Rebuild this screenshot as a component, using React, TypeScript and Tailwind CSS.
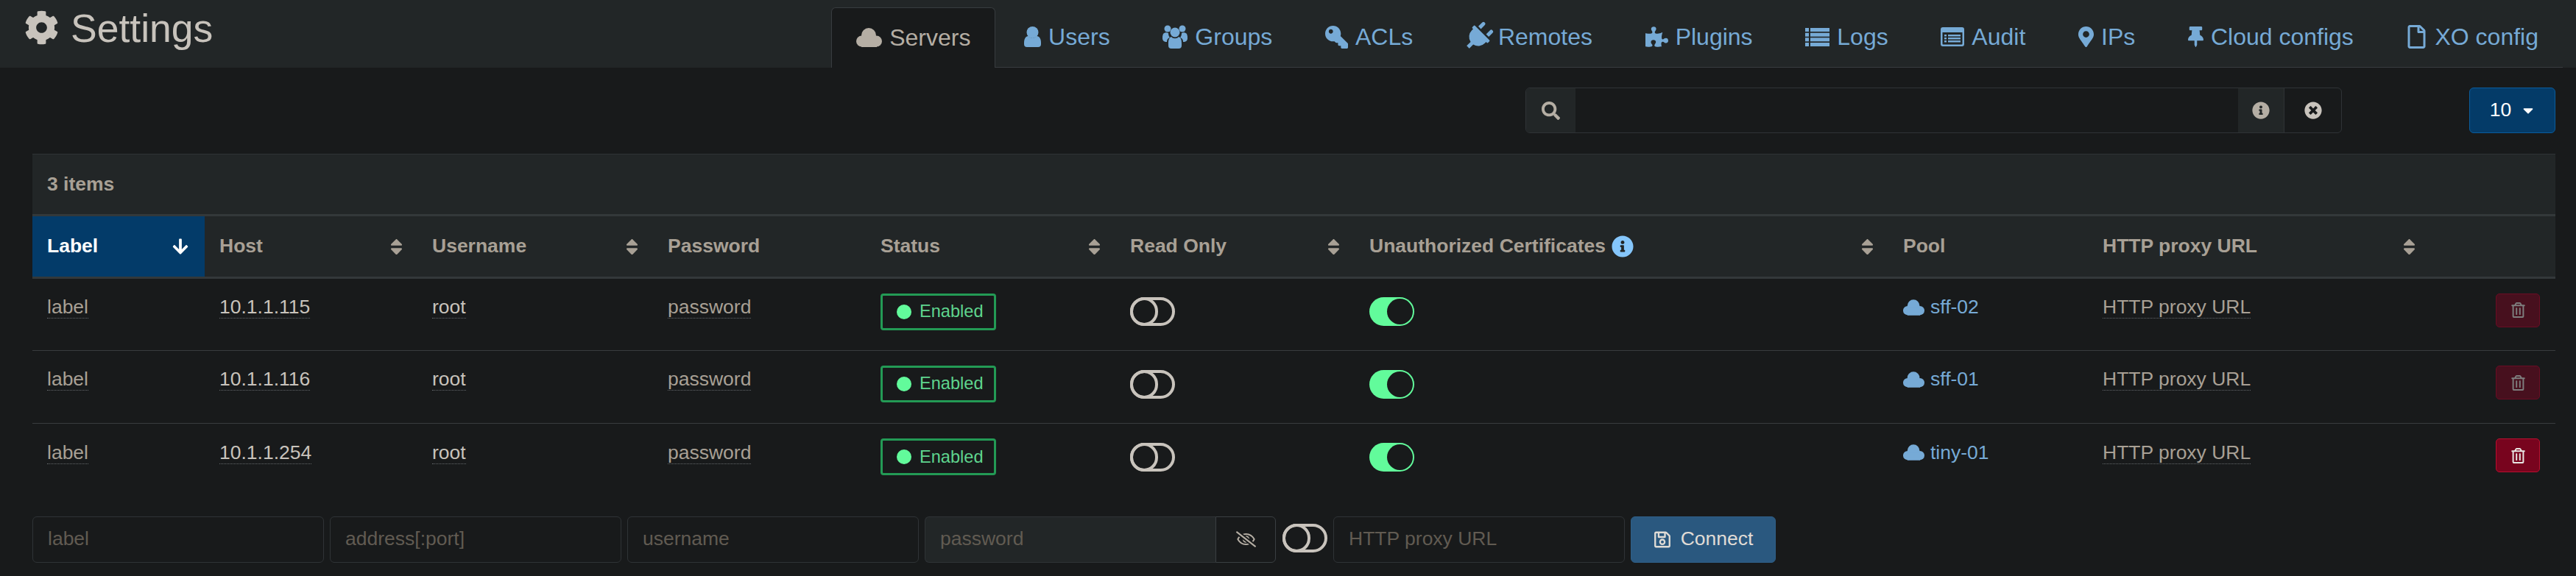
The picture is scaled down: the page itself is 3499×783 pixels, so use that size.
import React from "react";
import {
  FaArrowDown,
  FaCaretDown,
  FaCog,
  FaInfoCircle,
  FaKey,
  FaMapMarkerAlt,
  FaPlug,
  FaPuzzlePiece,
  FaRegEyeSlash,
  FaRegFile,
  FaRegSave,
  FaRegTrashAlt,
  FaSearch,
  FaSort,
  FaThumbtack,
  FaTimesCircle,
} from "react-icons/fa";

// older font-awesome shapes, react-icons only has the newer ones
function CloudIcon({ className }: { className: string }) {
  return (
    <svg viewBox="0 0 35 26" fill="currentColor" className={className}>
      <circle cx="7.5" cy="18" r="7.5" />
      <circle cx="17" cy="10" r="10" />
      <circle cx="27.5" cy="18" r="7.5" />
      <rect x="7" y="14" width="21" height="12" />
    </svg>
  );
}

function UserIcon({ className }: { className: string }) {
  return (
    <svg viewBox="0 0 23 28" fill="currentColor" className={className}>
      <circle cx="11.5" cy="8" r="8" />
      <path d="M0 22C0 17 2 13 6 13C8 16.500 15 16.500 17 13C21 13 23 17 23 22V24Q23 28 19 28H4Q0 28 0 24Z" />
    </svg>
  );
}

function GroupIcon({ className }: { className: string }) {
  return (
    <svg viewBox="0 0 34 32" fill="currentColor" className={className}>
      <circle cx="7" cy="5" r="4.500" />
      <circle cx="27" cy="5" r="4.500" />
      <circle cx="17" cy="10" r="6.500" />
      <path d="M1 12C3 10 6 10 8 11C8 14 9 16 10 17C7 18 6 20 6 23C2 23 0 21 0 18Q0 14 1 12Z" />
      <path d="M33 12C31 10 28 10 26 11C26 14 25 16 24 17C27 18 28 20 28 23C32 23 34 21 34 18Q34 14 33 12Z" />
      <path d="M8 25C8 20 9 17 12 16C14 19 20 19 22 16C25 17 26 20 26 25V28Q26 32 22 32H12Q8 32 8 28Z" />
    </svg>
  );
}

function LogsIcon({ className }: { className: string }) {
  return (
    <svg viewBox="0 0 33 25" fill="currentColor" className={className}>
      <rect x="0" y="0" width="5" height="5" />
      <rect x="7" y="0" width="26" height="5" />
      <rect x="0" y="6.700" width="5" height="5" />
      <rect x="7" y="6.700" width="26" height="5" />
      <rect x="0" y="13.300" width="5" height="5" />
      <rect x="7" y="13.300" width="26" height="5" />
      <rect x="0" y="20" width="5" height="5" />
      <rect x="7" y="20" width="26" height="5" />
    </svg>
  );
}

function AuditIcon({ className }: { className: string }) {
  return (
    <svg viewBox="0 0 32 26" fill="currentColor" className={className}>
      <path
        fillRule="evenodd"
        d="M3 0H29Q32 0 32 3V23Q32 26 29 26H3Q0 26 0 23V3Q0 0 3 0ZM2.500 7V22.500Q2.500 23.500 3.500 23.500H28.500Q29.500 23.500 29.500 22.500V7Z"
      />
      <rect x="5" y="10" width="3" height="2.500" />
      <rect x="5" y="14" width="3" height="2.500" />
      <rect x="5" y="18" width="3" height="2.500" />
      <rect x="10" y="10" width="17" height="2.500" />
      <rect x="10" y="14" width="17" height="2.500" />
      <rect x="10" y="18" width="17" height="2.500" />
    </svg>
  );
}

const tabs = [
  { name: "Users", icon: <UserIcon className="w-[23px] h-[28px]" /> },
  { name: "Groups", icon: <GroupIcon className="w-[34px] h-[32px]" /> },
  { name: "ACLs", icon: <FaKey className="w-[31px] h-[31px] -scale-x-100" /> },
  { name: "Remotes", icon: <FaPlug className="w-[34px] h-[40px] rotate-45" /> },
  { name: "Plugins", icon: <FaPuzzlePiece className="w-[31px] h-[30px]" /> },
  { name: "Logs", icon: <LogsIcon className="w-[33px] h-[25px]" /> },
  { name: "Audit", icon: <AuditIcon className="w-[32px] h-[26px]" /> },
  { name: "IPs", icon: <FaMapMarkerAlt className="w-[21px] h-[28px]" /> },
  { name: "Cloud configs", icon: <FaThumbtack className="w-[21px] h-[30px]" /> },
  { name: "XO config", icon: <FaRegFile className="w-[29px] h-[32px]" /> },
];

const servers = [
  { host: "10.1.1.115", pool: "sff-02", canDelete: false },
  { host: "10.1.1.116", pool: "sff-01", canDelete: false },
  { host: "10.1.1.254", pool: "tiny-01", canDelete: true },
];

function Toggle({ on }: { on?: boolean }) {
  if (on) {
    return (
      <span className="flex w-[61px] h-[39px] justify-end items-center rounded-full bg-[#62fb9b] pr-[2px]">
        <span className="block w-[35px] h-[35px] rounded-full bg-[#181a1b]" />
      </span>
    );
  }
  return (
    <span className="flex w-[61px] h-[39px] shrink-0 items-center rounded-full border-[4px] border-[#c8c3bc]">
      <span className="block w-[38px] h-[39px] -ml-[4px] rounded-full border-[4px] border-[#c8c3bc]" />
    </span>
  );
}

function Editable({ children, bright }: { children: React.ReactNode; bright?: boolean }) {
  return (
    <span
      className={`border-b border-dotted border-[#63676a] ${
        bright ? "text-[#c8c3bc]" : "text-[#a8a095]"
      }`}
    >
      {children}
    </span>
  );
}

function Th({ label, sort = true }: { label: React.ReactNode; sort?: boolean }) {
  return (
    <th className="pl-[20px] pr-[20px] text-left font-bold text-[#a8a095]">
      <div className="flex items-center justify-between">
        <span className="flex items-center gap-[8px]">{label}</span>
        {sort && <FaSort className="w-[17px] h-[27px]" />}
      </div>
    </th>
  );
}

function TextInput({ placeholder, className }: { placeholder: string; className: string }) {
  return (
    <div
      className={`flex h-[63px] items-center rounded-[6px] border border-[#2f3336] pl-[20px] text-[#615b52] ${className}`}
    >
      {placeholder}
    </div>
  );
}

export default function App() {
  return (
    <div className="min-h-screen bg-[#181a1b] text-[26.5px] leading-[37.5px] text-[#c8c3bc] font-['Liberation_Sans',Arial,sans-serif]">
      <header className="flex h-[92px] justify-between bg-[#222627]">
        <h2 className="flex items-start gap-[16px] pl-[33px] pt-[7px] text-[53.5px] leading-[64px] font-normal">
          <FaCog className="w-[47px] h-[47px] mt-[7px]" />
          Settings
        </h2>
        <ul className="flex h-[92px] gap-[5.7px] pt-[10px] mr-[18px] border-b border-[#383c3f] text-[32px] leading-[46px] text-[#76aad6]">
          <li className="flex h-[82px] items-start gap-[10px] rounded-t-[6px] border border-b-0 border-[#383c3f] bg-[#181a1b] px-[33px] pt-[17px] text-[#b5aea4]">
            <span className="flex h-[46px] items-center">
              <CloudIcon className="w-[35px] h-[26px]" />
            </span>
            Servers
          </li>
          {tabs.map((tab) => (
            <li key={tab.name} className="flex items-start gap-[10px] px-[33px] pt-[17px]">
              <span className="flex h-[46px] items-center">{tab.icon}</span>
              {tab.name}
            </li>
          ))}
        </ul>
      </header>

      <main className="pl-[44px] pr-[28px]">
        <div className="flex h-[62px] mt-[27px] items-stretch">
          <div className="ml-auto mr-[173px] flex w-[1109px] rounded-[6px] border border-[#2f3336]">
            <span className="flex w-[67px] items-center justify-center rounded-l-[5px] bg-[#222627] text-[#b5aea4]">
              <FaSearch className="w-[25px] h-[25px]" />
            </span>
            <span className="flex-1" />
            <span className="flex w-[63px] items-center justify-center border-r border-[#2f3336] bg-[#222627] text-[#b5aea4]">
              <FaInfoCircle className="w-[24px] h-[24px]" />
            </span>
            <span className="flex w-[77px] items-center justify-center">
              <FaTimesCircle className="w-[24px] h-[24px]" />
            </span>
          </div>
          <button className="flex w-[117px] items-center justify-center gap-[14px] rounded-[6px] border border-[#0a5c9d] bg-[#043b68] text-white">
            10
            <FaCaretDown className="w-[18px] h-[22px]" />
          </button>
        </div>

        <section className="mt-[28px]">
          <div className="flex h-[82px] items-center border-t border-[#2f3336] bg-[#222627] pl-[20px] font-bold text-[#a8a095]">
            3 items
          </div>
          <table className="w-full table-fixed">
            <colgroup>
              <col className="w-[234px]" />
              <col className="w-[289px]" />
              <col className="w-[320px]" />
              <col className="w-[289px]" />
              <col className="w-[339px]" />
              <col className="w-[325px]" />
              <col className="w-[725px]" />
              <col className="w-[271px]" />
              <col className="w-[465px]" />
              <col className="w-[170px]" />
            </colgroup>
            <thead>
              <tr className="h-[85px] border-y-[3px] border-[#33383a] bg-[#222627]">
                <th className="bg-[#033b69] pl-[20px] pr-[21px] text-left font-bold text-white">
                  <div className="flex items-center justify-between">
                    Label
                    <FaArrowDown className="w-[24px] h-[24px]" />
                  </div>
                </th>
                <Th label="Host" />
                <Th label="Username" />
                <Th label="Password" sort={false} />
                <Th label="Status" />
                <Th label="Read Only" />
                <Th
                  label={
                    <>
                      Unauthorized Certificates
                      <FaInfoCircle className="w-[30px] h-[30px] text-[#85c6fb]" />
                    </>
                  }
                />
                <Th label="Pool" sort={false} />
                <Th label="HTTP proxy URL" />
                <th />
              </tr>
            </thead>
            <tbody>
              {servers.map((server, i) => (
                <tr key={server.host} className={`h-[99px] ${i < 2 ? "border-b border-[#383c3f]" : ""}`}>
                  <td className="pl-[20px] pb-[20px] align-middle">
                    <Editable>label</Editable>
                  </td>
                  <td className="pl-[20px] pb-[20px] align-middle">
                    <Editable bright>{server.host}</Editable>
                  </td>
                  <td className="pl-[20px] pb-[20px] align-middle">
                    <Editable bright>root</Editable>
                  </td>
                  <td className="pl-[20px] pb-[20px] align-middle">
                    <Editable>password</Editable>
                  </td>
                  <td className="pl-[20px] pb-[8px] align-middle">
                    <span className="flex h-[50px] w-[157px] items-center gap-[11px] rounded-[4px] border-[3px] border-[#239a55] pl-[19px] text-[23.6px] text-[#5fd58e]">
                      <span className="block w-[20px] h-[20px] rounded-full bg-[#62fb9b]" />
                      Enabled
                    </span>
                  </td>
                  <td className="pl-[20px] pb-[8px] align-middle">
                    <Toggle />
                  </td>
                  <td className="pl-[20px] pb-[8px] align-middle">
                    <Toggle on />
                  </td>
                  <td className="pl-[20px] pb-[20px] align-middle text-[#76aad6]">
                    <span className="flex items-center gap-[8px]">
                      <CloudIcon className="w-[29px] h-[22px]" />
                      {server.pool}
                    </span>
                  </td>
                  <td className="pl-[20px] pb-[20px] align-middle">
                    <Editable>HTTP proxy URL</Editable>
                  </td>
                  <td className="pr-[21px] pb-[12px] align-middle">
                    <div className="flex justify-end">
                      <button
                        className={`flex w-[60px] h-[46px] items-center justify-center rounded-[5px] border ${
                          server.canDelete
                            ? "border-[#b8102f] bg-[#78041e] text-[#e8e6e3]"
                            : "border-[#6a0d24] bg-[#47101e] text-[#7d7d7d]"
                        }`}
                      >
                        <FaRegTrashAlt className="w-[19px] h-[21px]" />
                      </button>
                    </div>
                  </td>
                </tr>
              ))}
            </tbody>
          </table>
        </section>

        <form className="mt-[27px] flex h-[63px] gap-[8px]">
          <TextInput placeholder="label" className="w-[396px]" />
          <TextInput placeholder="address[:port]" className="w-[396px]" />
          <TextInput placeholder="username" className="w-[396px]" />
          <div className="flex w-[477px]">
            <div className="flex flex-1 items-center rounded-l-[6px] border border-r-0 border-[#2f3336] bg-[#222627] pl-[20px] text-[#615b52]">
              password
            </div>
            <span className="flex w-[82px] items-center justify-center rounded-r-[6px] border border-[#3a3f42] text-[#b5aea4]">
              <FaRegEyeSlash className="w-[27px] h-[22px]" />
            </span>
          </div>
          <span className="ml-[1px] flex items-center pb-[4px]">
            <Toggle />
          </span>
          <TextInput placeholder="HTTP proxy URL" className="w-[396px]" />
          <button
            type="button"
            className="flex w-[197px] items-center justify-center gap-[13px] rounded-[6px] border border-[#2f5f87] bg-[#2a587f] text-[#e0dcd6]"
          >
            <FaRegSave className="w-[24px] h-[25px]" />
            Connect
          </button>
        </form>
      </main>
    </div>
  );
}
